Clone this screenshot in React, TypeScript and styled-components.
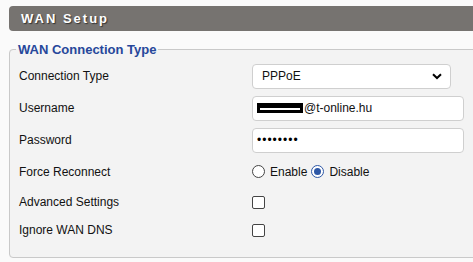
import React from "react";
import styled, { createGlobalStyle } from "styled-components";

const Global = createGlobalStyle`
  html, body { margin: 0; padding: 0; background: #fafafa; overflow: hidden; }
  body { font-family: "Liberation Sans", Arial, sans-serif; font-size: 12px; color: #111; }
`;

const Page = styled.div`
  width: 520px;
  padding: 6px 0 0 9px;
  box-sizing: border-box;
`;

const Header = styled.div`
  height: 25px;
  background: #767370;
  border-radius: 4px 0 0 4px;
  display: flex;
  align-items: center;
  padding-left: 12px;
  color: #fff;
  font-weight: bold;
  font-size: 13px;
  letter-spacing: 2px;
  text-shadow: 1px 1px 1px #333;
`;

const Fieldset = styled.fieldset`
  margin: 11px 0 0 0;
  padding: 0;
  border: 1px solid #c9c9c9;
  border-radius: 4px;
  background: #f3f3f3;
  min-width: 0;
`;

const Legend = styled.legend`
  margin-left: 6px;
  padding: 0 2px;
  color: #26479b;
  font-weight: bold;
  font-size: 13px;
`;

const Body = styled.div`
  padding: 3px 0 13px 9px;
`;

const Row = styled.div<{ $h: number }>`
  display: grid;
  grid-template-columns: 233px 1fr;
  align-items: center;
  height: ${(p) => p.$h}px;
`;

const Label = styled.div`
  font-size: 12px;
  color: #111;
`;

const SelectBox = styled.div`
  width: 199px;
  height: 25px;
  box-sizing: border-box;
  border: 1px solid #cfcfcf;
  border-radius: 4px;
  background: #fff;
  display: flex;
  align-items: center;
  justify-content: space-between;
  padding: 0 8px 0 9px;
`;

const TextBox = styled.div`
  width: 212px;
  height: 25px;
  box-sizing: border-box;
  border: 1px solid #cfcfcf;
  border-radius: 4px;
  background: #fff;
  display: flex;
  align-items: center;
  padding-left: 4px;
`;

const Redact = styled.span`
  display: inline-block;
  width: 46px;
  height: 10px;
  background: #000;
  position: relative;
  margin-right: 1px;
  &::after {
    content: "";
    position: absolute;
    left: 3px;
    right: 3px;
    top: 5px;
    height: 2px;
    background: #fff;
  }
`;

const Dots = styled.span`
  letter-spacing: 1px;
  font-size: 12px;
  color: #000;
`;

const Options = styled.div`
  display: flex;
  align-items: center;
`;

const Radio = styled.span<{ $on?: boolean }>`
  width: 13px;
  height: 13px;
  box-sizing: border-box;
  border-radius: 50%;
  border: 1px solid ${(p) => (p.$on ? "#2d57a6" : "#444")};
  background: #fff;
  display: inline-flex;
  align-items: center;
  justify-content: center;
  margin-right: 5px;
  &::after {
    content: "";
    width: 7px;
    height: 7px;
    border-radius: 50%;
    background: ${(p) => (p.$on ? "#2d57a6" : "transparent")};
  }
`;

const OptText = styled.span`
  margin-right: 4px;
`;

const Check = styled.span`
  width: 13px;
  height: 13px;
  box-sizing: border-box;
  border: 1px solid #444;
  border-radius: 2px;
  background: #fff;
  display: inline-block;
  vertical-align: middle;
`;

const Chevron = () => (
  <svg width="10" height="7" viewBox="0 0 10 7">
    <path d="M1 1.2 L5 5 L9 1.2" fill="none" stroke="#000" strokeWidth="2" />
  </svg>
);

export default function App() {
  return (
    <>
      <Global />
      <Page>
        <Header>WAN Setup</Header>
        <Fieldset>
          <Legend>WAN Connection Type</Legend>
          <Body>
            <Row $h={32}>
              <Label>Connection Type</Label>
              <SelectBox>
                <span>PPPoE</span>
                <Chevron />
              </SelectBox>
            </Row>
            <Row $h={32}>
              <Label>Username</Label>
              <TextBox>
                <Redact />
                <span>@t-online.hu</span>
              </TextBox>
            </Row>
            <Row $h={32}>
              <Label>Password</Label>
              <TextBox>
                <Dots>••••••••</Dots>
              </TextBox>
            </Row>
            <Row $h={31}>
              <Label>Force Reconnect</Label>
              <Options>
                <Radio />
                <OptText>Enable</OptText>
                <Radio $on />
                <OptText>Disable</OptText>
              </Options>
            </Row>
            <Row $h={29}>
              <Label>Advanced Settings</Label>
              <div><Check /></div>
            </Row>
            <Row $h={28}>
              <Label>Ignore WAN DNS</Label>
              <div><Check /></div>
            </Row>
          </Body>
        </Fieldset>
      </Page>
    </>
  );
}
